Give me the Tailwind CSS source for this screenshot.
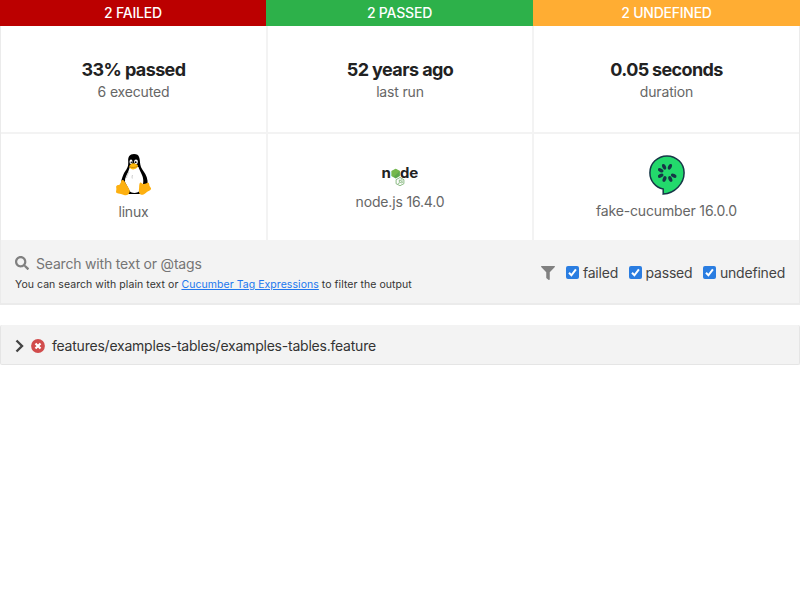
<!DOCTYPE html>
<html lang="en">
<head>
<meta charset="utf-8">
<title>Cucumber report</title>
<script src="https://cdn.jsdelivr.net/npm/@tailwindcss/browser@4"></script>
</head>
<body class="bg-white font-[Inter,sans-serif] text-[14px] leading-[18px] text-[#444]">
<main class="w-[800px]">
  <section>
    <div class="grid h-[26px] grid-cols-[266px_267px_267px] text-center leading-[26px] font-[450] text-white">
      <div class="bg-[#bb0000] tracking-[-0.2px]">2 FAILED</div>
      <div class="bg-[#2db14a] tracking-[-0.2px]">2 PASSED</div>
      <div class="bg-[#ffad33] tracking-[-0.24px]">2 UNDEFINED</div>
    </div>
    <div class="grid h-[214px] grid-cols-[265px_264px_265px] grid-rows-[106px_106px] gap-[2px] border-x border-[#ebebeb] bg-[#f3f3f3] text-center tracking-[-0.16px] text-[#666]">
      <div class="bg-white pt-[33px]">
        <div class="text-[18px] leading-[22px] font-bold tracking-[-0.6px] text-[#222]">33% passed</div>
        <div class="mt-[2px]">6 executed</div>
      </div>
      <div class="bg-white pt-[33px]">
        <div class="text-[18px] leading-[22px] font-bold tracking-[-0.58px] text-[#222]">52 years ago</div>
        <div class="mt-[2px]">last run</div>
      </div>
      <div class="bg-white pt-[33px]">
        <div class="text-[18px] leading-[22px] font-bold tracking-[-0.65px] text-[#222]">0.05 seconds</div>
        <div class="mt-[2px]">duration</div>
      </div>
      <div class="flex flex-col items-center bg-white pt-[20px]">
        <svg class="h-[42px] w-[36px]" viewBox="0 0 36 42">
          <path fill="#000" d="M18 0C13.500 0 12 3 12.200 7c.2 5-.4 6.500-2.700 9.800C7.300 20 6.400 23 5.500 26l-1.200 6L12 40h12l7-7c1.300-3.500.7-9-1.700-13-2-3.500-4.600-6-5-9.500C23.700 5 24 0 18 0Z"/>
          <path fill="#fff" d="M13.800 13 22.500 13c1 4 5 8.500 4.800 14-.1 5-2 9.500-5.500 11.200-3 1.300-6.500.8-8-1L9 28c-.5-4 2-7.500 3.300-10.500Z"/>
          <ellipse cx="15" cy="7.800" rx="1.500" ry="2.200" fill="#fff"/><ellipse cx="20" cy="7.800" rx="1.900" ry="2.400" fill="#fff"/>
          <circle cx="15.300" cy="8.200" r=".8"/><circle cx="19.700" cy="8.200" r=".9"/>
          <path fill="#fdb90c" d="M17.200 9.200c1.800 0 4.600 1.200 4.800 2.600.2 1.800-2.800 3.600-4.800 3.600-1.700 0-3.900-1.700-4-3 .1-1.300 2.500-3.200 4-3.200Z"/>
          <path stroke="#a56b08" stroke-width=".6" fill="none" d="M13.500 12.500c2.500 1.600 5 1.400 8-.3"/>
          <path fill="#fdb010" d="M6.300 26c1.700-.2 2.700 2 4 4.200 1.400 2.500 3.700 4.800 3.400 7.300-.3 2.800-2.700 4.300-5.700 3.500C5 40 2.500 39.500.8 39c-1.400-.6-.5-2.400-.4-4-.1-1.500-.8-2.800.5-3.600 1.200-.5 2.800-.2 3.500-1.600.7-1.300.4-3.500 1.900-3.800ZM24.300 28.500c1-.5 1.200 1.400 3.500 1.400 2 0 3-1.600 4.500-1.200 1.200.5.800 2.200 1.300 3.300.7 1.400 1.700 1.900 1.400 3-.3 1.300-3 2-4.700 3.500-2 1.700-3.800 2.800-5.600 2.100-2.200-.9-1.900-4.200-1.600-6.600.2-2-.1-4.500 1.200-5.500Z"/>
          <path stroke="#aaa" stroke-width=".6" fill="none" d="M16.500 21c-.6 1.500-.4 2.500-.2 3.500M13 18c-1 2-2.300 3.500-2.500 6"/>
        </svg>
        <div class="mt-[7px]">linux</div>
      </div>
      <div class="flex flex-col items-center bg-white pt-[30px]">
        <svg class="h-[22px] w-[36px]" viewBox="0 0 36 22">
          <g fill="#222" font-family="Inter, sans-serif" font-weight="700" font-size="14" letter-spacing="0">
            <text x="-.4" y="13.600" textLength="9.400" lengthAdjust="spacingAndGlyphs">n</text>
            <text x="18" y="13.600" textLength="9.400" lengthAdjust="spacingAndGlyphs">d</text>
            <text x="27.200" y="13.600" textLength="9" lengthAdjust="spacingAndGlyphs">e</text>
          </g>
          <path fill="#5da84b" d="m13.700 4.700 4.200 2.400v5l-4.200 2.400-4.200-2.400v-5Z"/>
          <path fill="#8cc84b" opacity=".5" d="m13.700 4.700 4.200 2.400-6.500 6.200-1.900-1.200v-5Z"/>
          <path fill="none" stroke="#7fb377" stroke-width=".9" d="m18 13.500 3.900 2.200v4L18 21.700l-3.900-2v-4Z"/>
          <path fill="none" stroke="#7fb377" stroke-width=".9" d="M17.300 15.600v3.200c0 .8-.4 1-1.400.7M20.500 16.300c-1-.7-2.300-.5-2.200.3.200 1 2.300.4 2.300 1.500 0 .9-1.500.9-2.500.3"/>
        </svg>
        <div class="mt-[7px]">node.js 16.4.0</div>
      </div>
      <div class="flex flex-col items-center bg-white pt-[21px]">
        <svg class="h-[40px] w-[36px]" viewBox="0 0 36 40">
          <path fill="#23d96c" stroke="#173647" stroke-width="1.500" d="M18 .9C8.500.9.900 8.400.900 17.700c0 8 5.500 14.700 13.300 16.300v5.100C25.800 38.300 35.100 28.600 35.100 17.700 35.100 8.400 27.500.9 18 .9Z"/>
          <g fill="#173647">
            <ellipse cx="15.100" cy="11.800" rx="1.800" ry="3" transform="rotate(-25 15.100 11.800)"/>
            <ellipse cx="20.900" cy="11.800" rx="1.800" ry="3" transform="rotate(25 20.900 11.800)"/>
            <ellipse cx="11.700" cy="15.300" rx="1.800" ry="3" transform="rotate(-65 11.700 15.300)"/>
            <ellipse cx="11.700" cy="20.700" rx="1.800" ry="3" transform="rotate(65 11.700 20.700)"/>
            <ellipse cx="15.500" cy="24" rx="1.800" ry="3" transform="rotate(20 15.500 24)"/>
            <ellipse cx="21.300" cy="24" rx="1.800" ry="3" transform="rotate(-25 21.300 24)"/>
            <ellipse cx="24.700" cy="20.700" rx="1.800" ry="3" transform="rotate(-65 24.700 20.700)"/>
          </g>
        </svg>
        <div class="mt-[7px]">fake-cucumber 16.0.0</div>
      </div>
    </div>
    <div class="flex h-[65px] justify-between border-x border-b-2 border-[#ebebeb] bg-[#f3f3f3] px-[14px]">
      <div class="pt-[15px]">
        <div class="flex items-center">
          <svg class="mb-[3px] h-[14px] w-[14px]" viewBox="0 0 512 512" fill="#808080"><path d="M505 442.700 405.300 343c-4.500-4.500-10.600-7-17-7H372c27.600-35.300 44-79.700 44-128C416 93.100 322.900 0 208 0S0 93.100 0 208s93.100 208 208 208c48.300 0 92.700-16.400 128-44v16.300c0 6.400 2.500 12.500 7 17l99.700 99.700c9.400 9.400 24.600 9.400 33.900 0l28.300-28.300c9.400-9.400 9.400-24.600.1-34zM208 336c-70.700 0-128-57.200-128-128 0-70.700 57.200-128 128-128 70.700 0 128 57.200 128 128 0 70.700-57.200 128-128 128z"/></svg>
          <div class="ml-[7px] tracking-[-0.19px] text-[#757575]">Search with text or @tags</div>
        </div>
        <p class="mt-[5px] text-[10.500px] leading-[14px] tracking-[0.055px] text-[#333]">You can search with plain text or <a class="text-[#2277ee] underline">Cucumber Tag Expressions</a> to filter the output</p>
      </div>
      <div class="flex items-center pt-[2px] tracking-[-0.2px]">
        <svg class="h-[14px] w-[14px]" viewBox="0 0 512 512" fill="#808080"><path d="M488 0H24C2.700 0-8 25.900 7.100 41L192 225.900V432c0 7.800 3.800 15.200 10.200 19.700l80 56C298 518.700 320 507.500 320 488V225.900L505 41C520 25.900 509.300 0 488 0z"/></svg>
        <label class="ml-[11px] flex items-center"><svg class="h-[13px] w-[13px]" viewBox="0 0 13 13"><rect width="13" height="13" rx="2" fill="#2a7de1"/><path d="m3 6.800 2.400 2.500L9.900 3.300" fill="none" stroke="#fff" stroke-width="2"/></svg><span class="ml-[4px]">failed</span></label>
        <label class="ml-[11px] flex items-center"><svg class="h-[13px] w-[13px]" viewBox="0 0 13 13"><rect width="13" height="13" rx="2" fill="#2a7de1"/><path d="m3 6.800 2.400 2.500L9.900 3.300" fill="none" stroke="#fff" stroke-width="2"/></svg><span class="ml-[3.500px]">passed</span></label>
        <label class="ml-[10.500px] flex items-center"><svg class="h-[13px] w-[13px]" viewBox="0 0 13 13"><rect width="13" height="13" rx="2" fill="#2a7de1"/><path d="m3 6.800 2.400 2.500L9.900 3.300" fill="none" stroke="#fff" stroke-width="2"/></svg><span class="ml-[4px]">undefined</span></label>
      </div>
    </div>
  </section>
  <section class="mt-[20px] flex h-[40px] items-center rounded-[2px] border-x border-b border-[#e5e5e5] bg-[#f3f3f3] pl-[14px] pt-[2px] text-[#333]">
    <svg class="h-[14px] w-[9px]" viewBox="0 0 9 14"><path d="M1.500 1.500 7 7l-5.500 5.500" fill="none" stroke="#444" stroke-width="2.400"/></svg>
    <svg class="ml-[7px] h-[14px] w-[14px]" viewBox="0 0 14 14"><circle cx="7" cy="7" r="6.900" fill="#d14c4c"/><path d="m4.500 4.500 5 5m0-5-5 5" stroke="#fff" stroke-width="2.200"/></svg>
    <span class="ml-[7px] tracking-[-0.225px]">features/examples-tables/examples-tables.feature</span>
  </section>
</main>
</body>
</html>
